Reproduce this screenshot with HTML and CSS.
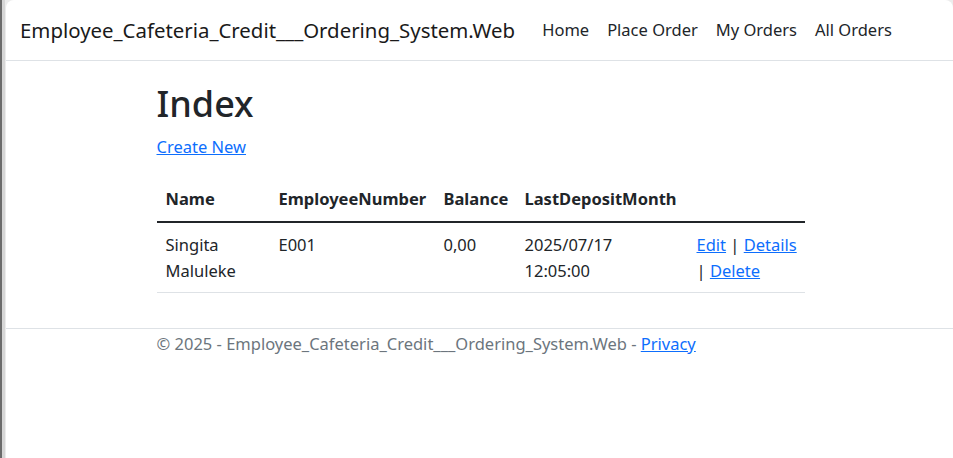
FILE: index.html
```html
<!DOCTYPE html>
<html lang="en">
<head>
<meta charset="utf-8">
<title>Index - Employee_Cafeteria_Credit___Ordering_System.Web</title>
<link rel="stylesheet" href="styles.css">
</head>
<body>
<div class="window">
  <header class="navbar">
    <a class="brand" href="#">Employee_Cafeteria_Credit___Ordering_System.Web</a>
    <ul class="nav">
      <li><a href="#">Home</a></li>
      <li><a href="#">Place Order</a></li>
      <li><a href="#">My Orders</a></li>
      <li><a href="#">All Orders</a></li>
    </ul>
  </header>
  <main class="container">
    <h1>Index</h1>
    <p class="create"><a href="#">Create New</a></p>
    <table class="table">
      <thead>
        <tr>
          <th class="c-name">Name</th>
          <th class="c-num">EmployeeNumber</th>
          <th class="c-bal">Balance</th>
          <th class="c-date">LastDepositMonth</th>
          <th class="c-act"></th>
        </tr>
      </thead>
      <tbody>
        <tr>
          <td>Singita Maluleke</td>
          <td>E001</td>
          <td>0,00</td>
          <td>2025/07/17 12:05:00</td>
          <td class="actions"><span class="nw"><a href="#">Edit</a> | <a href="#">Details</a></span> | <a href="#">Delete</a></td>
        </tr>
      </tbody>
    </table>
  </main>
  <footer class="footer">
    <div class="container">&copy; 2025 - Employee_Cafeteria_Credit___Ordering_System.Web - <a href="#">Privacy</a></div>
  </footer>
</div>
</body>
</html>
```

FILE: styles.css
```css
html, body {
  margin: 0;
  height: 100%;
}
body {
  background: linear-gradient(to right, #6b6b6b 0, #6b6b6b 2px, #d6d6d6 2px, #d6d6d6 5px, #ececec 5px, #ececec 6px);
  font-family: "Noto Sans", "Open Sans", sans-serif;
  font-size: 16.5px;
  line-height: 26px;
  color: #212529;
  overflow: hidden;
}
.window {
  margin-left: 6px;
  min-height: 100%;
  background: #fff;
  border-top-left-radius: 8px;
  border-top-right-radius: 8px;
}
a {
  color: #0d6efd;
}
.navbar {
  display: flex;
  align-items: center;
  padding: 0 14px;
  border-bottom: 1px solid #dee2e6;
  box-sizing: border-box;
  height: 61px;
}
.brand {
  font-size: 20.4px;
  color: #1a1a1a;
  text-decoration: none;
  margin-right: 18px;
}
.nav {
  display: flex;
  list-style: none;
  margin: 0;
  padding: 0;
}
.nav a {
  display: block;
  padding: 8px 9px;
  color: #212529;
  text-decoration: none;
}
.container {
  width: 648px;
  margin: 0 auto;
  position: relative;
  left: 1px;
}
h1 {
  font-size: 36px;
  line-height: 43px;
  font-weight: 500;
  margin: 21px 0 9px;
}
.create {
  margin: 0 0 17px;
}
.table {
  width: 100%;
  border-collapse: collapse;
  table-layout: fixed;
}
.table th, .table td {
  box-sizing: border-box;
  padding: 9px 9px;
  text-align: left;
  vertical-align: top;
}
.table th {
  font-weight: 700;
  border-bottom: 2px solid #212529;
}
.table td {
  padding-bottom: 8px;
  border-bottom: 1px solid #dee2e6;
}
.table td.actions {
  padding-right: 0;
}
.nw {
  white-space: nowrap;
}
.c-name { width: 113px; }
.c-num { width: 165px; }
.c-bal { width: 81px; }
.c-date { width: 172px; }
.footer {
  margin-top: 35px;
  border-top: 1px solid #dee2e6;
  color: #6c757d;
  line-height: 30px;
  white-space: nowrap;
}
```
